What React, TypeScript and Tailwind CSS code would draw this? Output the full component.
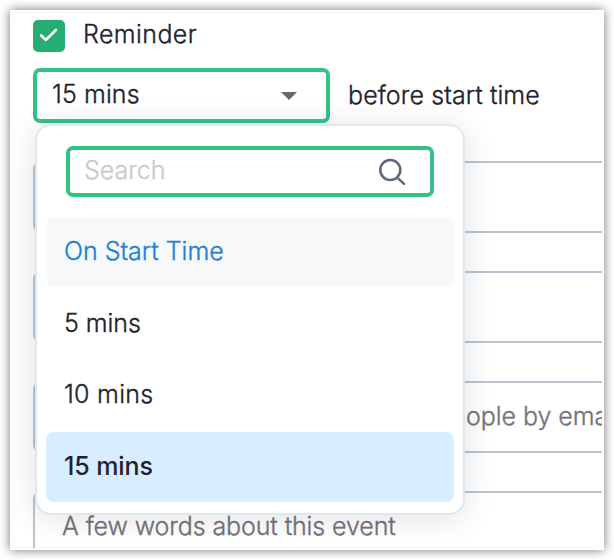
import { clsx } from 'clsx';

const OPTIONS = [
  { label: 'On Start Time', spacing: 'tracking-normal', state: 'hover' },
  { label: '5 mins', spacing: 'tracking-[-0.05px]', state: 'idle' },
  { label: '10 mins', spacing: 'tracking-[0.25px]', state: 'idle' },
  { label: '15 mins', spacing: 'tracking-[-0.1px]', state: 'selected' },
];

function Checkbox() {
  return (
    <span className="flex size-8 items-center justify-center rounded-[5px] bg-[#25ad74]">
      <svg width="20" height="16" viewBox="0 0 20 16" fill="none">
        <path d="M2.2 7.4 7 11.9 16.8 2" stroke="#fff" strokeWidth="2.7" strokeLinecap="round" strokeLinejoin="round" />
      </svg>
    </span>
  );
}

function SearchIcon() {
  return (
    <svg width="28" height="28" viewBox="0 0 28 28" fill="none" stroke="#5f687c">
      <circle cx="11.3" cy="12" r="10" strokeWidth="2.6" />
      <path d="M19.6 20.9 25 25.9" strokeWidth="2.6" strokeLinecap="round" />
    </svg>
  );
}

function ReminderMenu() {
  return (
    <div className="absolute top-[114px] left-[25px] h-[391px] w-[430px] rounded-[16px] border-2 border-[#dfe8ed] bg-white px-[9px] pt-5 shadow-[0_3px_32px_rgba(0,0,0,0.12)]">
      <div className="ml-5 flex h-[51px] w-[368px] items-center justify-between rounded-[7px] border-4 border-[#34c285] pr-[23px] pl-[14px]">
        <span className="relative -top-0.5 text-[#cbcbcb]">Search</span>
        <SearchIcon />
      </div>
      <ul className="mt-5 flex flex-col gap-[1.67px]">
        {OPTIONS.map((o) => (
          <li
            key={o.label}
            className={clsx(
              'flex h-[70px] items-center rounded-[8px] pb-[2px] pl-[18px]',
              o.spacing,
              o.state === 'hover' && 'bg-[#f6f8fa] text-[#1e80d8]',
              o.state === 'selected' && 'bg-[#d8edff] font-medium [-webkit-text-stroke:0]',
            )}
          >
            {o.label}
          </li>
        ))}
      </ul>
    </div>
  );
}

export default function App() {
  return (
    <div className="h-[560px] w-[614px] overflow-hidden bg-white p-[10px] font-['Inter',sans-serif] text-[25px] leading-[32px] font-light whitespace-nowrap text-[#22222c] [-webkit-text-stroke:0.35px_currentColor]">
      <div className="h-[540px] w-[594px] bg-white shadow-[0_0_10px_rgba(0,0,0,0.55)]">
        <div className="relative h-[538px] w-[592px] overflow-hidden pt-[10px] pl-[23px]">
          <div className="flex h-8 items-center gap-[18px]">
            <Checkbox />
            <span className="pb-[5px] tracking-[0.4px]">Reminder</span>
          </div>

          <div className="mt-4 flex h-[55px] items-center gap-[18px]">
            <div className="flex h-[55px] w-[297px] items-center justify-between rounded-[7px] border-4 border-[#34c285] pr-[29px] pl-[15px]">
              <span className="pb-[3px] tracking-[0.1px]">15 mins</span>
              <svg width="16" height="8" viewBox="0 0 16 8">
                <path d="M0 0h16L8 8z" fill="#686862" />
              </svg>
            </div>
            <span className="pb-[2px] tracking-[0.1px]">before start time</span>
          </div>

          <div className="mt-[38px] flex w-[640px] flex-col gap-[38px] text-[#73737b]">
            <div className="h-[72px] shrink-0 rounded-[8px] border-2 border-[#b9c5d1]" />
            <div className="h-[72px] shrink-0 rounded-[8px] border-2 border-[#b9c5d1]" />
            <div className="flex h-[72px] shrink-0 items-center rounded-[8px] border-2 border-[#b9c5d1] pb-[2px] pl-[431px]">
              <span className="tracking-[-0.05px]">ople by ema</span>
            </div>
            <div className="flex h-[110px] shrink-0 rounded-[8px] border-2 border-[#b9c5d1] pt-[17px] pl-[27px]">
              <span className="tracking-[-0.1px]">A few words about this event</span>
            </div>
          </div>

          <ReminderMenu />
        </div>
      </div>
    </div>
  );
}
